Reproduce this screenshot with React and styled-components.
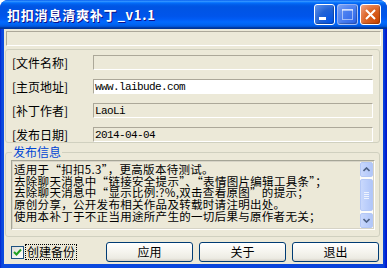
import React from 'react';
import styled, { createGlobalStyle } from 'styled-components';

const GlobalStyle = createGlobalStyle`
  html, body {
    margin: 0;
    padding: 0;
    background: #ffffff;
  }
  body {
    font-family: "Noto Sans CJK SC", "Liberation Sans", sans-serif;
    font-size: 12px;
    color: #000;
  }
`;

const Window = styled.div`
  width: 387px;
  height: 268px;
  display: flex;
  flex-direction: column;
  background: linear-gradient(to right, #0019cf 0, #0841d9 1px, #0a4be0 3px, #0841d9 384px, #0019cf 386px);
  border-radius: 8px 8px 0 0;
  overflow: hidden;
`;

const TitleBar = styled.div`
  height: 29px;
  flex: none;
  display: flex;
  align-items: center;
  padding: 0 6px 0 7px;
  background: linear-gradient(
    to bottom,
    #0058ee 0%,
    #3593ff 4%,
    #288eff 6%,
    #127dff 8%,
    #036ffc 10%,
    #0262ee 14%,
    #0057e5 20%,
    #0054e3 24%,
    #0055eb 56%,
    #005bf5 66%,
    #026afe 76%,
    #0062ef 86%,
    #0052d6 92%,
    #0040ab 94%,
    #003092 100%
  );
`;

const Title = styled.div`
  flex: 1;
  color: #ffffff;
  font-weight: bold;
  font-size: 13px;
  letter-spacing: 0.8px;
  text-shadow: 1px 1px #0f1089;
  white-space: nowrap;
`;

const CaptionButtons = styled.div`
  display: flex;
  gap: 2px;
`;

const CaptionButton = styled.div`
  width: 21px;
  height: 21px;
  box-sizing: border-box;
  border: 1px solid ${p => (p.$faded ? 'rgba(255,255,255,0.45)' : '#ffffff')};
  border-radius: 3px;
  display: flex;
  align-items: center;
  justify-content: center;
  background: ${p =>
    p.$close
      ? 'radial-gradient(circle at 90% 90%, #cc4600 0%, #dc6527 55%, #f0a58a 100%)'
      : p.$faded
      ? 'radial-gradient(circle at 90% 90%, #2f66e8 0%, #4a7ef0 55%, #7da3f2 100%)'
      : 'radial-gradient(circle at 90% 90%, #0054e9 0%, #2263d5 55%, #6696eb 100%)'};
  box-shadow: inset -1px -1px 1px rgba(0, 0, 0, 0.25);
`;

const Body = styled.div`
  flex: 1;
  margin: 0 4px 4px;
  background: #ece9d8;
  padding: 2px 2px 0;
  display: flex;
  flex-direction: column;
`;

const Sunken = styled.div`
  box-sizing: border-box;
  height: 15px;
  border-top: 1px solid #aca899;
  border-left: 1px solid #aca899;
  border-right: 1px solid #ffffff;
  border-bottom: 1px solid #ffffff;
  background: ${p => (p.$white ? '#ffffff' : '#ece9d8')};
  display: flex;
  align-items: center;
  padding-left: 1px;
  overflow: hidden;
`;

const StatusBox = styled(Sunken)`
  width: 375px;
`;

const FieldGroup = styled.div`
  box-sizing: border-box;
  margin: 3px 0 0 -1px;
  width: 375px;
  height: 94px;
  border: 1px solid #d0d0bf;
  border-radius: 3px;
  padding: 5px 0 0 6px;
  display: grid;
  grid-template-columns: 81px 280px;
  grid-auto-rows: 15px;
  row-gap: 9px;
  align-items: center;
`;

const Label = styled.div`
  font-size: 12px;
  line-height: 15px;
  white-space: nowrap;
`;

const FieldValue = styled.span`
  font-family: "Liberation Mono", monospace;
  font-size: 11px;
  letter-spacing: -0.6px;
`;

const InfoGroup = styled.fieldset`
  box-sizing: border-box;
  margin: 3px 0 0 -1px;
  width: 375px;
  height: 91px;
  border: 1px solid #d0d0bf;
  border-radius: 3px;
  padding: 2px 4px 0 5px;
  min-width: 0;
`;

const Legend = styled.legend`
  color: #0046d5;
  font-size: 12px;
  line-height: 12px;
  padding: 0 1px;
  margin-left: 1px;
`;

const Memo = styled.div`
  box-sizing: border-box;
  height: 70px;
  border: 1px solid;
  border-color: #a5a597 #ffffff #ffffff #a5a597;
  outline: 1px solid #d6d3c6;
  outline-offset: -2px;
  background: #ece9d8;
  display: flex;
`;

const MemoText = styled.div`
  flex: 1;
  padding: 3px 0 0 2px;
  font-size: 11.5px;
  letter-spacing: 0.3px;
  line-height: 11.7px;
  white-space: nowrap;
  overflow: hidden;
`;

const ScrollBar = styled.div`
  width: 13px;
  margin: 1px 1px 1px 0;
  display: flex;
  flex-direction: column;
  gap: 1px;
  background: #fdfdfa;
`;

const ScrollButton = styled.div`
  height: ${p => (p.$thumb ? 'auto' : '15px')};
  flex: ${p => (p.$thumb ? '1' : 'none')};
  margin: ${p => (p.$thumb ? '1px 0' : '0')};
  box-sizing: border-box;
  border: 1px solid #b4c8f6;
  border-radius: 2px;
  background: linear-gradient(to right, #c9d8fc 0%, #bccffb 50%, #b1c6f8 100%);
  display: flex;
  align-items: center;
  justify-content: center;
`;

const BottomRow = styled.div`
  display: flex;
  align-items: center;
  margin-top: 5px;
  padding: 0 2px 0 5px;
`;

const CheckLabel = styled.label`
  display: flex;
  align-items: center;
  gap: 2px;
  flex: 1;
`;

const CheckBox = styled.span`
  width: 13px;
  height: 13px;
  box-sizing: border-box;
  border: 1px solid #1c5180;
  background: linear-gradient(135deg, #dcdcd7 0%, #f4f4f0 60%, #ffffff 100%);
  display: flex;
  align-items: center;
  justify-content: center;
`;

const CheckText = styled.span`
  outline: 1px dotted #000;
  outline-offset: 0;
  padding: 0 1px;
  line-height: 14px;
  font-size: 12px;
`;

const Buttons = styled.div`
  display: flex;
  gap: 6px;
`;

const Button = styled.button`
  width: 87px;
  height: 20px;
  box-sizing: border-box;
  border: 1px solid #003c74;
  border-radius: 3px;
  background: linear-gradient(to bottom, #ffffff 0%, #f5f4ee 50%, #ecebe3 85%, #d6d0c5 100%);
  font-family: "Noto Sans CJK SC", sans-serif;
  font-size: 12px;
  color: #000;
  padding: 0;
  line-height: 16px;
`;

const lines = [
  '适用于“扣扣5.3”，更高版本待测试。',
  '去除聊天消息中“链接安全提示”、“表情图片编辑工具条”；',
  '去除聊天消息中“显示比例:?%,双击查看原图”的提示；',
  '原创分享，公开发布相关作品及转载时请注明出处。',
  '使用本补丁于不正当用途所产生的一切后果与原作者无关；',
];

const fields = [
  { label: '[文件名称]', value: '' },
  { label: '[主页地址]', value: 'www.laibude.com', white: true },
  { label: '[补丁作者]', value: 'LaoLi' },
  { label: '[发布日期]', value: '2014-04-04' },
];

const Arrow = ({ up }) => (
  <svg width="7" height="5" viewBox="0 0 7 5">
    <path
      d={up ? 'M0.5 4 L3.5 1 L6.5 4' : 'M0.5 1 L3.5 4 L6.5 1'}
      fill="none"
      stroke="#4d6185"
      strokeWidth="1.6"
    />
  </svg>
);

const App = () => (
  <>
    <GlobalStyle />
    <Window>
      <TitleBar>
        <Title>扣扣消息清爽补丁_v1.1</Title>
        <CaptionButtons>
          <CaptionButton>
            <svg width="19" height="19" viewBox="0 0 19 19">
              <rect x="4" y="12" width="7" height="3" fill="#fff" />
            </svg>
          </CaptionButton>
          <CaptionButton $faded>
            <svg width="19" height="19" viewBox="0 0 19 19">
              <rect x="4.5" y="4.5" width="10" height="10" fill="none" stroke="rgba(255,255,255,0.5)" />
              <rect x="4" y="4" width="11" height="2" fill="rgba(255,255,255,0.5)" />
            </svg>
          </CaptionButton>
          <CaptionButton $close>
            <svg width="19" height="19" viewBox="0 0 19 19">
              <path d="M5 5 L14 14 M14 5 L5 14" stroke="#fff" strokeWidth="2" />
            </svg>
          </CaptionButton>
        </CaptionButtons>
      </TitleBar>
      <Body>
        <StatusBox />
        <FieldGroup>
          {fields.map(f => (
            <React.Fragment key={f.label}>
              <Label>{f.label}</Label>
              <Sunken $white={f.white}>
                <FieldValue>{f.value}</FieldValue>
              </Sunken>
            </React.Fragment>
          ))}
        </FieldGroup>
        <InfoGroup>
          <Legend>发布信息</Legend>
          <Memo>
            <MemoText>
              {lines.map(l => (
                <div key={l}>{l}</div>
              ))}
            </MemoText>
            <ScrollBar>
              <ScrollButton>
                <Arrow up />
              </ScrollButton>
              <ScrollButton $thumb>
                <svg width="5" height="7" viewBox="0 0 5 7">
                  <path d="M0 0.5 H5 M0 2.5 H5 M0 4.5 H5 M0 6.5 H5" stroke="#eef3fe" />
                </svg>
              </ScrollButton>
              <ScrollButton>
                <Arrow />
              </ScrollButton>
            </ScrollBar>
          </Memo>
        </InfoGroup>
        <BottomRow>
          <CheckLabel>
            <CheckBox>
              <svg width="9" height="9" viewBox="0 0 9 9">
                <path d="M1 4 L3.5 6.5 L8 1.5" fill="none" stroke="#21a121" strokeWidth="2" />
              </svg>
            </CheckBox>
            <CheckText>创建备份</CheckText>
          </CheckLabel>
          <Buttons>
            <Button>应用</Button>
            <Button>关于</Button>
            <Button>退出</Button>
          </Buttons>
        </BottomRow>
      </Body>
    </Window>
  </>
);

export default App;
